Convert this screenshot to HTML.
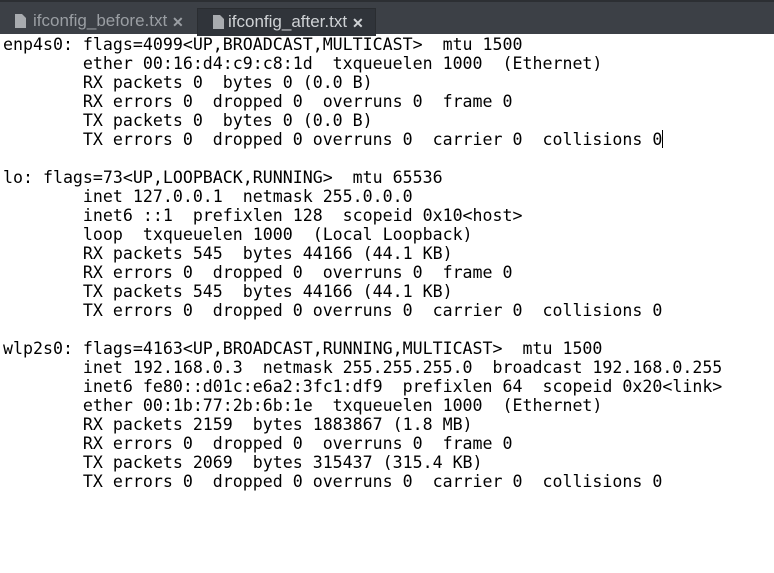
<!DOCTYPE html>
<html><head><style>
body{margin:0;width:774px;height:573px;background:#fff;overflow:hidden;position:relative}
.bar{position:absolute;left:0;top:0;width:774px;height:34px;background:#3c4046;border-top:2px solid #2c2f33;box-sizing:border-box}
.tab{position:absolute;top:6px;height:28px;font:17px "Liberation Sans",sans-serif;line-height:28px;box-sizing:border-box}
.t1{left:0;width:196px;color:#9a9ea3}
.t2{left:197px;width:179px;background:#30343a;color:#cfd2d5;border:1px solid #2a2d31;border-bottom:none}
.ic{position:absolute;top:6px;width:11px;height:14px;background:#a8abaf}
.ic:after{content:"";position:absolute;right:0;top:0;border-left:4px solid #fff0;border-top:4px solid #3c4046}
.t2 .ic:after{border-top-color:#30343a}
.lab{position:absolute;top:-1px;white-space:nowrap}
.x{position:absolute;top:0;font-weight:bold;font-size:14px}
pre{position:absolute;left:3px;top:35px;margin:0;font:16.6px "DejaVu Sans Mono","Liberation Mono",monospace;line-height:19px;color:#000}
.cur{position:absolute;left:662px;top:130px;width:1px;height:18px;background:#000}
</style></head><body>
<div class="bar">
<div class="tab t1"><div class="ic" style="left:15px"></div><span class="lab" style="left:33px">ifconfig_before.txt</span><span class="x" style="left:172px">✕</span></div>
<div class="tab t2"><div class="ic" style="left:15px"></div><span class="lab" style="left:30px">ifconfig_after.txt</span><span class="x" style="left:154px">✕</span></div>
</div>
<pre>enp4s0: flags=4099&lt;UP,BROADCAST,MULTICAST&gt;  mtu 1500
        ether 00:16:d4:c9:c8:1d  txqueuelen 1000  (Ethernet)
        RX packets 0  bytes 0 (0.0 B)
        RX errors 0  dropped 0  overruns 0  frame 0
        TX packets 0  bytes 0 (0.0 B)
        TX errors 0  dropped 0 overruns 0  carrier 0  collisions 0

lo: flags=73&lt;UP,LOOPBACK,RUNNING&gt;  mtu 65536
        inet 127.0.0.1  netmask 255.0.0.0
        inet6 ::1  prefixlen 128  scopeid 0x10&lt;host&gt;
        loop  txqueuelen 1000  (Local Loopback)
        RX packets 545  bytes 44166 (44.1 KB)
        RX errors 0  dropped 0  overruns 0  frame 0
        TX packets 545  bytes 44166 (44.1 KB)
        TX errors 0  dropped 0 overruns 0  carrier 0  collisions 0

wlp2s0: flags=4163&lt;UP,BROADCAST,RUNNING,MULTICAST&gt;  mtu 1500
        inet 192.168.0.3  netmask 255.255.255.0  broadcast 192.168.0.255
        inet6 fe80::d01c:e6a2:3fc1:df9  prefixlen 64  scopeid 0x20&lt;link&gt;
        ether 00:1b:77:2b:6b:1e  txqueuelen 1000  (Ethernet)
        RX packets 2159  bytes 1883867 (1.8 MB)
        RX errors 0  dropped 0  overruns 0  frame 0
        TX packets 2069  bytes 315437 (315.4 KB)
        TX errors 0  dropped 0 overruns 0  carrier 0  collisions 0</pre>
<div class="cur"></div>
</body></html>
